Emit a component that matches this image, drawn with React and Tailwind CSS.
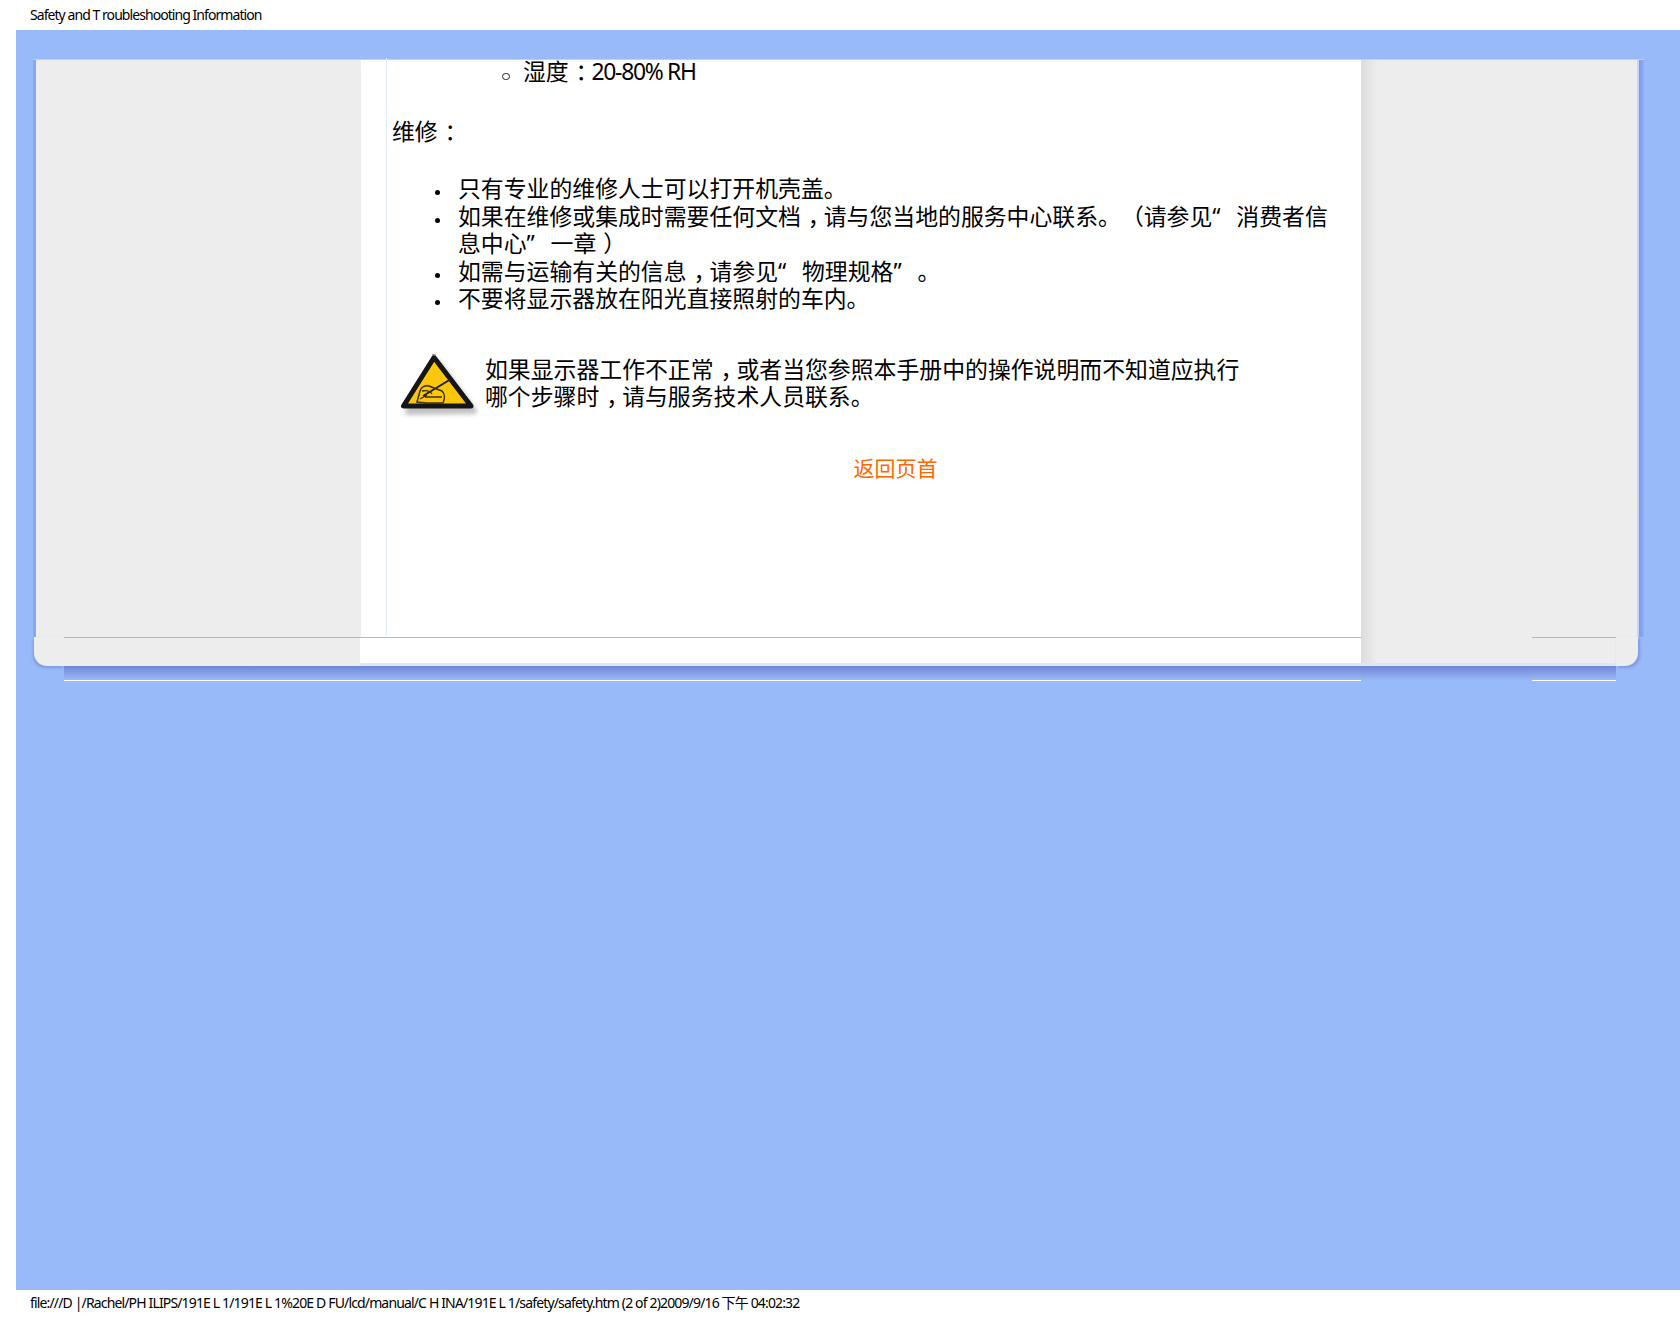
import React from 'react';

const font = { fontFamily: '"Noto Sans", "Noto Sans CJK SC", sans-serif' };

// comma, colon and closing paren sit further right in their cell in the picture
const P = ({ children }) => <span className="pl-[0.3em] pr-[0.2em] [font-feature-settings:'halt']">{children}</span>;

// quote plus the gap after it fills one full cell
const Q = ({ children }) => <span className="inline-block w-[24px] leading-none font-['Noto_Sans',sans-serif]">{children}</span>;

const Bullet = ({ children }) => (
    <li className="flex">
        <span className="w-[5px] h-[5px] rounded-full bg-black shrink-0 mt-[15px] mr-[18px]"></span>
        <span>{children}</span>
    </li>
);

const WarningIcon = () => (
    <svg width="84" height="72" viewBox="0 0 84 72" className="shrink-0">
        <defs>
            <filter id="soft" x="-20%" y="-20%" width="140%" height="140%">
                <feGaussianBlur stdDeviation="2.2" />
            </filter>
            <filter id="ink" x="-10%" y="-10%" width="120%" height="120%">
                <feGaussianBlur stdDeviation="0.55" />
            </filter>
        </defs>
        <path d="M42 10 L78 58 L12 59 Z" fill="#a8a8a8" opacity="0.7" stroke="#a8a8a8" strokeWidth="6" strokeLinejoin="round" filter="url(#soft)" />
        <g filter="url(#ink)">
            <path d="M38 4.5 L7.5 53 L75 53 Z" fill="#fcc60e" stroke="#151515" strokeWidth="5" strokeLinejoin="round" />
            <path d="M36 1.5 L40 2" stroke="#9a9a9a" strokeWidth="1.5" />
            <path d="M27 43 L55 26" stroke="#222" strokeWidth="2" fill="none" />
            <path d="M21 49 L24 38 C25 34 29 32 33 33 L38 35 L46 38 C49 41 49 46 47 50 L30 50 Z" stroke="#3a2f00" strokeWidth="1.5" fill="none" />
            <path d="M26 38 C30 37 34 38 36 41 M29 44 L46 44 M24 46 L31 42" stroke="#3a2f00" strokeWidth="1.3" fill="none" />
        </g>
    </svg>
);

const App = () => {
    return (
        <div className="w-[1680px] h-[1320px] bg-white flex flex-col text-black" style={font}>
            {/* page header */}
            <div className="h-[30px] pl-[30px] text-[14px] leading-[30px] tracking-[-0.94px] shrink-0">
                Safety and T roubleshooting Information
            </div>

            <div className="flex-1 ml-[16px] bg-[#99baf8] pt-[29px] pl-[17px]">
                {/* top of the panel */}
                <div className="flex w-fit h-[578px] border-t border-[#bcd0fa]">
                    <div className="w-[3px] bg-[#8aa8f0]"></div>
                    <div className="w-[325px] bg-[#ededed]"></div>
                    <div className="w-[1000px] bg-white pl-[25px]">
                        <div className="h-full border-l border-[#e0eaff] pl-[5px] text-[22.86px] leading-[27.5px] [text-spacing-trim:space-all]">
                            <ul className="-mt-[2px] pl-[110px]">
                                <li className="flex">
                                    <span className="w-[8px] h-[7px] rounded-full border border-[#222] shrink-0 mt-[15px] mr-[13px]"></span>
                                    <span>湿度<P>：</P><span className="tracking-[-1.3px]">20-80% RH</span></span>
                                </li>
                            </ul>
                            <p className="mt-[32px]">维修<P>：</P></p>
                            <ul className="pl-[43px] mt-[30px]">
                                <Bullet>只有专业的维修人士可以打开机壳盖。</Bullet>
                                <Bullet>如果在维修或集成时需要任何文档<P>，</P>请与您当地的服务中心联系。（请参见<Q>“</Q>消费者信<br />息中心<Q>”</Q>一章<P>）</P></Bullet>
                                <Bullet>如需与运输有关的信息<P>，</P>请参见<Q>“</Q>物理规格<Q>”</Q>。</Bullet>
                                <Bullet>不要将显示器放在阳光直接照射的车内。</Bullet>
                            </ul>
                            <div className="flex gap-[5px] mt-[40px] ml-[4px]">
                                <WarningIcon />
                                <p className="pt-[3px]">如果显示器工作不正常<P>，</P>或者当您参照本手册中的操作说明而不知道应执行<br />哪个步骤时<P>，</P>请与服务技术人员联系。</p>
                            </div>
                            <div className="mt-[30px] pl-[38px] text-center text-[21px] text-[#ff6600]">返回页首</div>
                        </div>
                    </div>
                    <div className="w-[276px] bg-[#ededed] flex">
                        <div className="w-[16px] bg-gradient-to-r from-[#dcdcdc] to-[#ededed]"></div>
                    </div>
                    <div className="w-[2px] bg-[#c6d5f8]"></div>
                    <div className="w-[5px] bg-gradient-to-r from-[#7f97e4] to-[#90aef2]"></div>
                </div>

                {/* bottom of the panel, rounded corners */}
                <div className="flex h-[29px] ml-px">
                    <div className="w-[30px] bg-[#ededed] rounded-bl-[13px] shadow-[-1px_2px_3px_#7f97e4]"></div>
                    <div className="w-[296px] bg-[#ededed] border-t border-[#99baf8]"></div>
                    <div className="w-[1001px] bg-white border-t border-t-[#99baf8] border-b-[3px] border-b-[#dce6fb]"></div>
                    <div className="w-[171px] bg-[#ededed] border-b-[3px] border-[#dce6fb] flex">
                        <div className="w-[16px] bg-gradient-to-r from-[#dcdcdc] to-[#ededed]"></div>
                    </div>
                    <div className="w-[84px] bg-[#ededed] border-t border-t-[#99baf8] border-b-[3px] border-b-[#dce6fb]"></div>
                    <div className="w-[22px] bg-[#ededed] rounded-br-[13px] shadow-[2px_2px_3px_#7f97e4]"></div>
                </div>

                {/* shadow under the panel, with its white rule */}
                <div className="flex h-[15px] ml-px">
                    <div className="w-[30px]"></div>
                    <div className="w-[1297px] bg-gradient-to-b from-[#6f86d6] to-[#99baf8] border-b border-white"></div>
                    <div className="w-[171px] bg-gradient-to-b from-[#6f86d6] to-[#99baf8]"></div>
                    <div className="w-[84px] bg-gradient-to-b from-[#6f86d6] to-[#99baf8] border-b border-white"></div>
                </div>
            </div>

            {/* page footer */}
            <div className="h-[30px] pl-[30px] text-[14px] leading-[26px] tracking-[-0.85px] shrink-0">
                file:///D |/Rachel/PH ILIPS/191E L 1/191E L 1%20E D FU/lcd/manual/C H INA/191E L 1/safety/safety.htm (2 of 2)2009/9/16 下午 04:02:32
            </div>
        </div>
    );
};

export default App;
